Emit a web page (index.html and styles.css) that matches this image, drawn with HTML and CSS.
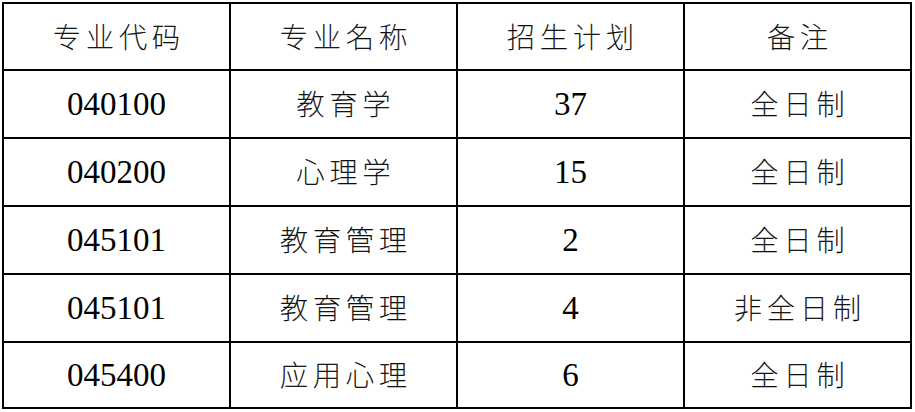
FILE: index.html
```html
<!DOCTYPE html>
<html lang="en">
<head>
<meta charset="utf-8">
<link rel="stylesheet" href="styles.css">
</head>
<body>
<table class="plan">
  <colgroup><col class="c"><col class="c"><col class="c"><col class="c"></colgroup>
  <tr class="head">
    <td><span class="zh">专业代码</span></td>
    <td><span class="zh">专业名称</span></td>
    <td><span class="zh">招生计划</span></td>
    <td><span class="zh">备注</span></td>
  </tr>
  <tr>
    <td><span class="num">040100</span></td>
    <td><span class="zh">教育学</span></td>
    <td><span class="num">37</span></td>
    <td><span class="zh">全日制</span></td>
  </tr>
  <tr>
    <td><span class="num">040200</span></td>
    <td><span class="zh">心理学</span></td>
    <td><span class="num">15</span></td>
    <td><span class="zh">全日制</span></td>
  </tr>
  <tr>
    <td><span class="num">045101</span></td>
    <td><span class="zh">教育管理</span></td>
    <td><span class="num">2</span></td>
    <td><span class="zh">全日制</span></td>
  </tr>
  <tr>
    <td><span class="num">045101</span></td>
    <td><span class="zh">教育管理</span></td>
    <td><span class="num">4</span></td>
    <td><span class="zh">非全日制</span></td>
  </tr>
  <tr class="last">
    <td><span class="num">045400</span></td>
    <td><span class="zh">应用心理</span></td>
    <td><span class="num">6</span></td>
    <td><span class="zh">全日制</span></td>
  </tr>
</table>
</body>
</html>
```
FILE: styles.css
```css
html, body {
  margin: 0;
  padding: 0;
  background: #fff;
}
body {
  padding: 2px 0 0 2px;
}
.plan {
  border-collapse: collapse;
  table-layout: fixed;
  width: 910px;
  border: 2px solid #000;
}
.plan .c {
  width: 227px;
}
.plan td {
  border: 2px solid #000;
  height: 66px;
  padding: 0;
  text-align: center;
  vertical-align: middle;
  color: #000;
}
.plan .head td {
  height: 65px;
}
.plan .last td {
  height: 64px;
}
.zh {
  font-family: "Noto Sans CJK JP", "Noto Sans CJK SC", sans-serif;
  font-weight: 100;
  -webkit-text-stroke: 0.35px #000;
  font-size: 28px;
  letter-spacing: 5px;
  margin-right: -5px;
  line-height: 1;
  color: #000;
}
.num {
  font-family: "Liberation Serif", "Times New Roman", serif;
  font-size: 33px;
  line-height: 1;
}
```
